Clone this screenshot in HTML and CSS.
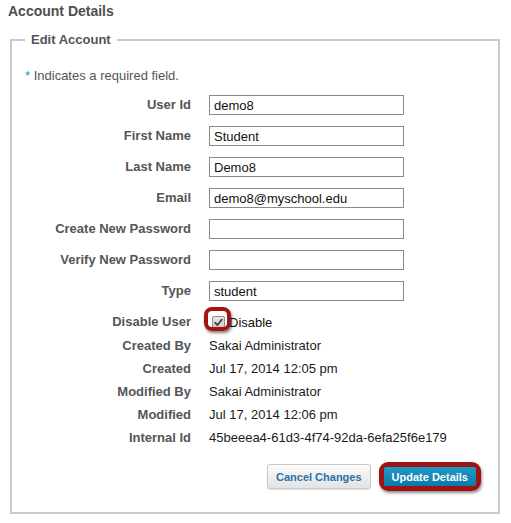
FILE: index.html
```html
<!DOCTYPE html>
<html>
<head>
<meta charset="utf-8">
<link rel="stylesheet" href="styles.css">
</head>
<body>
<h1 class="page-title">Account Details</h1>
<fieldset class="panel">
  <legend class="panel-legend">Edit Account</legend>
  <p class="note"><span class="req">*</span> Indicates a required field.</p>
  <div class="form">
    <div class="row field"><label class="lbl">User Id</label><input class="txt" type="text" value="demo8"></div>
    <div class="row field"><label class="lbl">First Name</label><input class="txt" type="text" value="Student"></div>
    <div class="row field"><label class="lbl">Last Name</label><input class="txt" type="text" value="Demo8"></div>
    <div class="row field"><label class="lbl">Email</label><input class="txt" type="text" value="demo8@myschool.edu"></div>
    <div class="row field"><label class="lbl">Create New Password</label><input class="txt" type="password" value=""></div>
    <div class="row field"><label class="lbl">Verify New Password</label><input class="txt" type="password" value=""></div>
    <div class="row field"><label class="lbl">Type</label><input class="txt" type="text" value="student"></div>
    <div class="row field check-row"><label class="lbl">Disable User</label>
      <span class="check-wrap">
        <span class="check-box"><svg width="9" height="9" viewBox="0 0 9 9"><path d="M1.2 4.8 L3.4 7 L7.8 1.6" fill="none" stroke="#444" stroke-width="1.8" stroke-linecap="round" stroke-linejoin="round"/></svg></span>
        <span class="check-text">Disable</span>
        <span class="mark-ring"></span>
      </span>
    </div>
    <div class="row info"><span class="lbl">Created By</span><span class="val">Sakai Administrator</span></div>
    <div class="row info"><span class="lbl">Created</span><span class="val">Jul 17, 2014 12:05 pm</span></div>
    <div class="row info"><span class="lbl">Modified By</span><span class="val">Sakai Administrator</span></div>
    <div class="row info"><span class="lbl">Modified</span><span class="val">Jul 17, 2014 12:06 pm</span></div>
    <div class="row info"><span class="lbl">Internal Id</span><span class="val">45beeea4-61d3-4f74-92da-6efa25f6e179</span></div>
  </div>
  <div class="actions">
    <button class="btn btn-secondary" type="button">Cancel Changes</button>
    <span class="btn-ring"><button class="btn btn-primary" type="button">Update Details</button></span>
  </div>
</fieldset>
</body>
</html>
```
FILE: styles.css
```css
html, body {
  margin: 0;
  padding: 0;
  background: #fff;
}
body {
  font-family: "Liberation Sans", Arial, sans-serif;
  color: #555;
  width: 511px;
}
.page-title {
  margin: 0;
  padding: 3px 0 0 8px;
  font-size: 14px;
  line-height: 16px;
  font-weight: bold;
  color: #4f4f4f;
  height: 32px;
  box-sizing: border-box;
}
.panel {
  margin: 0 0 0 10px;
  width: 490px;
  box-sizing: border-box;
  border: 2px solid #cbcbcb;
  padding: 0 0 21px 0;
  min-width: 0;
}
.panel-legend {
  margin-left: 13px;
  padding: 0 6px;
  font-size: 13px;
  line-height: 16px;
  font-weight: bold;
  color: #555;
}
.note {
  margin: 20px 0 0 13px;
  font-size: 13px;
  line-height: 16px;
  color: #555;
}
.req {
  color: #2b8fc1;
}
.form {
  margin-top: 11px;
  display: flex;
  flex-direction: column;
}
.row {
  display: grid;
  grid-template-columns: 179px auto;
  column-gap: 18px;
  align-items: center;
}
.field {
  height: 20px;
  margin-bottom: 11px;
}
.check-row {
  margin-bottom: 2px;
}
.info {
  height: 23px;
}
.lbl {
  text-align: right;
  font-size: 13px;
  font-weight: bold;
  color: #555;
  line-height: 16px;
}
.txt {
  width: 195px;
  height: 20px;
  box-sizing: border-box;
  border: 1px solid #8a8a8a;
  padding: 0 4px;
  margin: 0;
  font-family: "Liberation Sans", Arial, sans-serif;
  font-size: 13px;
  color: #111;
  background: #fff;
  outline: none;
}
.val {
  font-size: 13px;
  color: #1a1a1a;
  line-height: 16px;
}
.check-wrap {
  position: relative;
  display: flex;
  align-items: center;
  height: 20px;
}
.check-box {
  margin-left: 3px;
  width: 11px;
  height: 11px;
  border: 1px solid #8e8e8e;
  border-radius: 2px;
  background: linear-gradient(#e8e8e8, #c9c9c9);
  display: flex;
  align-items: center;
  justify-content: center;
}
.check-text {
  margin-left: 4px;
  font-size: 13px;
  color: #111;
}
.mark-ring {
  position: absolute;
  left: -5px;
  top: -5px;
  width: 27px;
  height: 24px;
  box-sizing: border-box;
  border: 4px solid #a11414;
  border-radius: 8px;
  box-shadow: 1px 2px 3px rgba(0, 0, 0, 0.5);
}
.actions {
  margin-top: 13px;
  display: flex;
  justify-content: flex-end;
  align-items: center;
  gap: 8px;
  padding-right: 17px;
}
.btn {
  font-family: "Liberation Sans", Arial, sans-serif;
  font-size: 11px;
  font-weight: bold;
  margin: 0;
  cursor: pointer;
}
.btn-secondary {
  height: 25px;
  padding: 0 8px;
  border: 1px solid #c9c9c9;
  border-radius: 3px;
  background: linear-gradient(#fbfbfb, #e3e3e3);
  color: #2e6fa7;
  box-shadow: 0 1px 1px rgba(0, 0, 0, 0.12);
}
.btn-ring {
  display: inline-flex;
  border: 5px solid #9e1313;
  border-radius: 9px;
  box-shadow: 1px 2px 3px rgba(0, 0, 0, 0.45);
}
.btn-primary {
  height: 19px;
  padding: 0 8px;
  border: none;
  border-radius: 3px;
  background: linear-gradient(#1d9bc9, #0b7aa8);
  color: #fff;
}
```
